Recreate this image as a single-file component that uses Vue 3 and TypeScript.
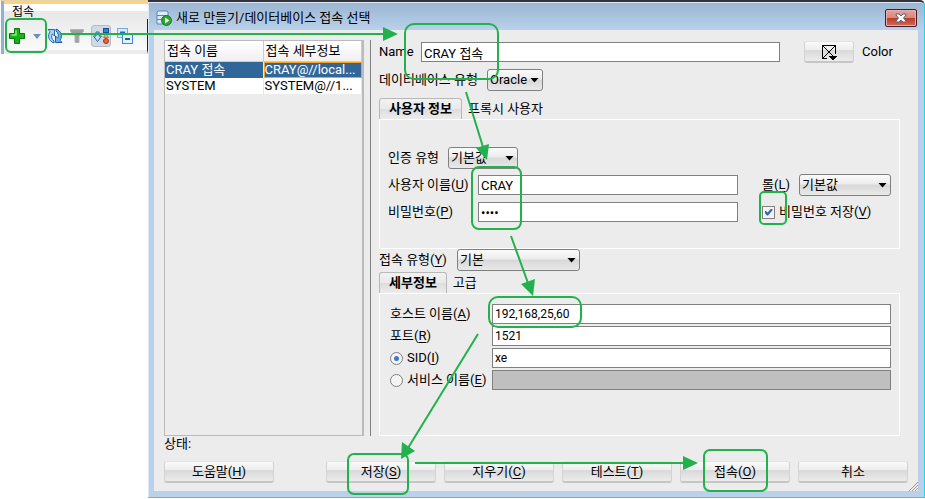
<script setup lang="ts">
import { ref } from 'vue'

interface Connection {
  name: string
  detail: string
}

interface Action {
  id: string
  label: string
  key?: string
}

const connections: Connection[] = [
  { name: 'CRAY 접속', detail: 'CRAY@//local...' },
  { name: 'SYSTEM', detail: 'SYSTEM@//1...' },
]

const actions: Action[] = [
  { id: 'save', label: '저장', key: 'S' },
  { id: 'clear', label: '지우기', key: 'C' },
  { id: 'test', label: '테스트', key: 'T' },
  { id: 'connect', label: '접속', key: 'O' },
  { id: 'cancel', label: '취소' },
]

const selected = ref(0)
const name = ref('CRAY 접속')
const username = ref('CRAY')
const password = ref('cray')
const savePassword = ref(true)
const host = ref('192,168,25,60')
const port = ref('1521')
const sid = ref('xe')
const service = ref('')
const target = ref('sid')
</script>

<template>
  <div class="screen">
    <section class="dock">
      <div class="dock-tab">접속</div>
      <div class="toolbar">
        <button class="tool add" type="button" aria-label="새 접속">
          <svg width="16" height="16" viewBox="0 0 16 16">
            <path d="M5.500 .5h5v5h5v5h-5v5h-5v-5h-5v-5h5z" fill="#12b512" stroke="#087808" />
            <path d="M7 2.500V7H2.500" fill="none" stroke="#8bee7c" stroke-width="1.500" />
          </svg>
          <svg width="8" height="5" viewBox="0 0 8 5"><path d="M0 0h8L4 5z" fill="#7091b8" /></svg>
        </button>
        <button class="tool" type="button" aria-label="새로 고침">
          <svg width="16" height="16" viewBox="0 0 16 16">
            <path d="M1 1.500h6.500V8L5.300 6C4 8 4.500 11 7 13v2C1.500 13 .2 7.500 3 3.700z" fill="#a5d2f8" stroke="#2468ad" />
            <path d="M15 14.500H8.500V8l2.200 2C12 8 11.500 5 9 3V1c5.500 2 6.800 7.500 4 11.300z" fill="#6db2ee" stroke="#1e5da5" />
          </svg>
        </button>
        <button class="tool" type="button" aria-label="필터">
          <svg width="16" height="16" viewBox="0 0 16 16">
            <path d="M1.500 1.500h13v2L10 8v6.500H6V8L1.500 3.500z" fill="#a0a0a0" stroke="#b4b4b4" />
          </svg>
        </button>
        <button class="tool pressed" type="button" aria-label="정렬">
          <svg width="16" height="18" viewBox="1 0 16 18">
            <path d="M4 5h3v4h2.500L5.500 14.500 1.500 9H4z" fill="#c4e2fc" stroke="#2563ad" />
            <rect x="11.500" y="1.500" width="5" height="4" fill="#3280df" stroke="#174f9b" />
            <path d="M14 6.500l2.500 4h-5z" fill="#f2b13c" stroke="#9b6c25" stroke-width=".7" />
            <circle cx="14" cy="14" r="2.500" fill="#f2603c" stroke="#ad2e18" />
          </svg>
        </button>
        <button class="tool" type="button" aria-label="모두 접기">
          <svg width="16" height="16" viewBox="0 0 16 16">
            <rect x=".5" y=".5" width="10" height="9" fill="#dbecff" stroke="#7ba6e0" />
            <path d="M3 4.500h5" stroke="#2368c2" stroke-width="2" />
            <rect x="5.500" y="6.500" width="10" height="9" fill="#e4f1ff" stroke="#4784d5" />
            <path d="M8 11h5" stroke="#1c5cbc" stroke-width="2" />
          </svg>
        </button>
      </div>
    </section>

    <main class="dialog">
      <header class="titlebar">
        <svg width="16" height="16" viewBox="0 0 16 16">
          <path d="M1 2l1-1h9l1 1v12H1z" fill="#dcebfa" stroke="#5586bd" />
          <path d="M1 5.500h11M1 9.500h11" stroke="#5586bd" />
          <circle cx="10.500" cy="10.500" r="5" fill="#2ca52c" stroke="#178017" />
          <path d="M9 7.500v6l4.500-3z" fill="#fff" />
        </svg>
        <h1>새로 만들기/데이터베이스 접속 선택</h1>
        <button class="close" type="button" aria-label="닫기">
          <svg width="12" height="10" viewBox="0 0 12 10">
            <path d="M1 1h3l2 2 2-2h3v1L8.500 5 11 8v1H8L6 7 4 9H1V8l2.500-3L1 2z" fill="#fff" stroke="#53657c" />
          </svg>
        </button>
      </header>

      <form class="content" @submit.prevent>
        <div class="body">
          <div class="list">
            <table>
              <thead>
                <tr><th>접속 이름</th><th>접속 세부정보</th></tr>
              </thead>
              <tbody>
                <tr
                  v-for="(item, i) in connections"
                  :key="item.name"
                  :class="{ active: i === selected }"
                  @click="selected = i"
                >
                  <td>{{ item.name }}</td>
                  <td>{{ item.detail }}</td>
                </tr>
              </tbody>
            </table>
          </div>
          <div class="splitter"></div>

          <div class="editor">
            <div class="row name-row">
              <label for="name">Name</label>
              <input id="name" v-model="name" class="grow" type="text" />
              <button id="color" class="btn color" type="button" aria-label="Color">
                <svg width="16" height="16" viewBox="0 0 16 16" shape-rendering="crispEdges">
                  <path d="M6 14.500H1.500v-13h13V10M2 2l12 12M14 2L2 14" fill="none" stroke="#000" />
                  <path d="M8 12h8v1h-1v1h-1v1h-1v1h-2v-1h-1v-1H9v-1H8z" fill="#000" />
                </svg>
              </button>
              <label class="color-label" for="color">Color</label>
            </div>

            <div class="row db-row">
              <label for="db">데이터베이스 유형</label>
              <span class="combo db">
                <select id="db"><option>Oracle</option></select><i></i>
              </span>
            </div>

            <div class="tabs">
              <button class="tab current" type="button">사용자 정보</button>
              <button class="tab" type="button">프록시 사용자</button>
            </div>
            <div class="panel user-panel">
              <div class="row">
                <label class="auth-label" for="auth">인증 유형</label>
                <span class="combo auth">
                  <select id="auth"><option>기본값</option></select><i></i>
                </span>
              </div>
              <div class="row">
                <label class="user-label" for="user">사용자 이름(<u>U</u>)</label>
                <input id="user" v-model="username" class="grow" type="text" />
                <div class="side">
                  <label class="role-label" for="role">롤(<u>L</u>)</label>
                  <span class="combo grow">
                    <select id="role"><option>기본값</option></select><i></i>
                  </span>
                </div>
              </div>
              <div class="row">
                <label class="user-label" for="pass">비밀번호(<u>P</u>)</label>
                <input id="pass" v-model="password" class="grow" type="password" />
                <div class="side">
                  <input id="remember" v-model="savePassword" type="checkbox" />
                  <label for="remember">비밀번호 저장(<u>V</u>)</label>
                </div>
              </div>
            </div>

            <div class="row">
              <label class="kind-label" for="kind">접속 유형(<u>Y</u>)</label>
              <span class="combo kind">
                <select id="kind"><option>기본</option></select><i></i>
              </span>
            </div>

            <div class="tabs detail-tabs">
              <button class="tab current" type="button">세부정보</button>
              <button class="tab" type="button">고급</button>
            </div>
            <div class="panel detail-panel">
              <div class="field">
                <label for="host">호스트 이름(<u>A</u>)</label>
                <input id="host" v-model="host" type="text" />
              </div>
              <div class="field">
                <label for="port">포트(<u>R</u>)</label>
                <input id="port" v-model="port" type="text" />
              </div>
              <div class="field">
                <label><input v-model="target" type="radio" name="target" value="sid" />SID(<u>I</u>)</label>
                <input v-model="sid" type="text" aria-label="SID" />
              </div>
              <div class="field">
                <label><input v-model="target" type="radio" name="target" value="service" />서비스 이름(<u>E</u>)</label>
                <input v-model="service" type="text" aria-label="서비스 이름" :disabled="target !== 'service'" />
              </div>
            </div>
          </div>
        </div>

        <p class="status">상태:</p>
        <footer class="actions">
          <button class="btn help" type="button">도움말(<u>H</u>)</button>
          <button v-for="a in actions" :key="a.id" class="btn" type="button">
            {{ a.label }}<template v-if="a.key">(<u>{{ a.key }}</u>)</template>
          </button>
        </footer>
      </form>
      <svg class="grip" width="9" height="9" viewBox="0 0 9 9">
        <path d="M0 9l9-9M3 9l6-6M6 9l3-3" stroke="#a29c8c" />
      </svg>
    </main>

    <svg class="guide" width="925" height="499" viewBox="0 0 925 499" aria-hidden="true">
      <g fill="none" stroke="#22b14c" stroke-width="2">
        <rect x="6" y="19" width="40" height="33" rx="5" />
        <rect x="405" y="24" width="93" height="55" rx="9" />
        <rect x="472" y="167" width="49" height="62" rx="7" />
        <rect x="760" y="192" width="26" height="32" rx="4" />
        <rect x="489" y="297" width="92" height="30" rx="9" />
        <rect x="348" y="454" width="60" height="40" rx="6" />
        <rect x="704" y="450" width="63" height="41" rx="6" />
        <path d="M60 34H384M466 92L483 147M511 236L528 283M478 334L408 448M415 463H684" />
      </g>
      <g fill="#22b14c">
        <path d="M383 27v14l15-7z" />
        <path d="M476 148l13-4-2 16z" />
        <path d="M521 284l14-5-2 17z" />
        <path d="M402 442l13 9-14 8z" />
        <path d="M683 456v14l15-7z" />
      </g>
    </svg>
  </div>
</template>

<style>
body {
  margin: 0;
  background: #fff;
}
</style>

<style scoped>
* {
  box-sizing: border-box;
}

.screen {
  position: relative;
  display: flex;
  align-items: flex-start;
  color: #000;
  font: 13px/16px Roboto, "Noto Sans CJK KR", sans-serif;
}

button,
input,
select {
  margin: 0;
  color: inherit;
  font: inherit;
}

u {
  text-underline-offset: 2px;
}

/* Docked connections toolbar */
.dock {
  flex: none;
  width: 148px;
  padding-left: 3px;
  border-left: 1px solid #fff;
  border-top: 1px solid #e8d3a4;
  background: linear-gradient(90deg, #91b0d3 3px, #ececec 3px);
}

.dock-tab {
  height: 18px;
  padding: 2px 8px 0;
  border-top: 3px solid #ffd27d;
  background: linear-gradient(#fff 7px, #e9e9e9 7px);
  font-size: 12px;
  line-height: 12px;
}

.toolbar {
  display: flex;
  align-items: center;
  gap: 6px;
  height: 35px;
  padding: 3px 0 0 5px;
  border-right: 1px solid #222;
  border-bottom: 4px solid #ececec;
  background: linear-gradient(#ebebeb, #fafafa);
}

.tool {
  display: flex;
  align-items: center;
  padding: 0;
  border: 0;
  background: none;
}

.add {
  gap: 8px;
}

.tool.pressed {
  padding: 1px;
  border: 1px solid #b4bbc8;
  border-radius: 3px;
  background: #d3d9e3;
}

/* Dialog frame */
.dialog {
  position: relative;
  flex: 1;
  min-width: 0;
  padding: 0 6px 6px;
  border: solid #28d2e6;
  border-width: 0 1px 1px 0;
  border-top: 2px solid #35313b;
  border-top-right-radius: 5px;
  background: linear-gradient(#9ab5d2, #b9d1ea 28px);
  box-shadow: inset 1px 1px #dce9f6;
}

.titlebar {
  display: flex;
  align-items: center;
  gap: 4px;
  height: 28px;
  padding: 4px 1px 0 2px;
}

h1 {
  flex: 1;
  margin: 0;
  font-size: 13px;
  font-weight: 400;
}

.close {
  display: grid;
  place-items: center;
  width: 32px;
  height: 18px;
  padding: 0;
  border: 1px solid #481a28;
  border-radius: 2px;
  background: linear-gradient(#e5a49b, #d9877a 50%, #b93c22 50%, #d0695a);
  box-shadow: inset 0 0 0 1px #e8b0a8;
}

.content {
  padding: 10px 10px 8px;
  background: #ececec;
}

.body {
  display: flex;
}

.list {
  flex: none;
  width: 200px;
  border: 1px solid #bbb;
  border-right-width: 2px;
}

table {
  width: 100%;
  border-collapse: separate;
  border-spacing: 0;
  table-layout: fixed;
}

th {
  height: 21px;
  padding: 0 2px;
  border-right: 1px solid #ccc;
  border-bottom: 1px solid #ccc;
  background: linear-gradient(#fff, #f0f0f0);
  font-weight: 400;
  text-align: left;
}

td {
  height: 16px;
  padding: 0 1px;
  border-right: 1px solid #e6e6e6;
  background: #fff;
  line-height: 14px;
  white-space: nowrap;
}

.active td {
  background: #316699;
  color: #fff;
}

.active td:last-child {
  padding: 0;
  border: 1px solid #f9a31b;
}

.splitter {
  flex: none;
  width: 7px;
  border-right: 1px solid #808080;
}

.editor {
  flex: 1;
  min-width: 0;
  padding: 1px 8px 0;
}

.row,
.side {
  display: flex;
  align-items: center;
  height: 22px;
}

.grow {
  flex: 1;
  min-width: 0;
}

label {
  flex: none;
  white-space: nowrap;
}

input[type="text"],
input[type="password"] {
  height: 20px;
  padding: 0 2px;
  border: 1px solid #808080;
  border-radius: 0;
  outline: 0;
  background: #fff;
}

input:disabled {
  background: #bfbfbf !important;
}

.name-row label:first-child {
  width: 42px;
}

.color {
  width: 50px;
  margin-left: 24px;
}

.name-row .color-label {
  width: 38px;
  margin-left: 8px;
}

.db-row {
  margin: 6px 0 7px;
}

.db-row label {
  width: 108px;
}

.combo {
  display: grid;
  align-items: center;
  height: 22px;
}

.combo select {
  grid-area: 1 / 1;
  width: 100%;
  height: 22px;
  padding: 0 2px;
  border: 1px solid #808080;
  border-radius: 3px;
  appearance: none;
  background: linear-gradient(#fbfbfb, #ececec 45%, #d8d8d8 50%, #e9e9e9);
}

.combo i {
  grid-area: 1 / 1;
  justify-self: end;
  width: 9px;
  height: 5px;
  margin-right: 4px;
  background: #000;
  clip-path: polygon(0 0, 100% 0, 50% 100%);
  pointer-events: none;
}

.db {
  width: 56px;
}

.auth {
  width: 70px;
}

.kind {
  width: 123px;
}

.tabs {
  display: flex;
  height: 21px;
}

.tab {
  padding: 0 8px;
  border: 0;
  background: none;
  white-space: nowrap;
}

.tab.current {
  border: 1px solid #b8b8b8;
  border-bottom: 0;
  border-radius: 3px 3px 0 0;
  padding: 0 9px;
  background: linear-gradient(#f2f2f2, #e9e9e9 50%, #dcdcdc 50%, #ececec);
  font-weight: 700;
}

.tab + .tab {
  padding-left: 6px;
}

.panel {
  border: 1px solid #fff;
}

.user-panel {
  display: grid;
  gap: 5px;
  padding: 27px 8px 25px;
}

.auth-label {
  width: 60px;
}

.user-label {
  width: 90px;
}

.side {
  width: 129px;
  margin-left: 24px;
}

.role-label {
  width: 37px;
}

.kind-label {
  width: 78px;
}

.detail-tabs {
  margin-top: 1px;
}

.detail-panel {
  display: grid;
  gap: 2px;
  padding: 10px 8px 45px 10px;
}

.field {
  display: grid;
  grid-template-columns: 102px 1fr;
  align-items: center;
}

.field input[type="text"] {
  font-size: 12px;
}

.field label {
  display: flex;
  align-items: center;
}

input[type="checkbox"],
input[type="radio"] {
  display: grid;
  flex: none;
  place-items: center;
  width: 13px;
  height: 13px;
  margin-right: 4px;
  border: 1px solid #808080;
  appearance: none;
  background: #f4f4f4;
}

input[type="radio"] {
  border-radius: 50%;
}

input[type="radio"]:checked::after {
  width: 5px;
  height: 5px;
  border-radius: 50%;
  background: #3f76cf;
  content: "";
}

input[type="checkbox"]:checked::after {
  width: 8px;
  height: 7px;
  background: #3565c4;
  clip-path: polygon(0 35%, 20% 35%, 38% 58%, 85% 0, 100% 0, 100% 25%, 45% 100%, 30% 100%, 0 60%);
  content: "";
}

.status {
  margin: 0 0 10px;
  line-height: 15px;
}

.actions {
  display: flex;
  gap: 8px;
}

.btn {
  height: 22px;
  padding: 0;
  border: 1px solid #d2d2d2;
  border-top-color: #e4e4e4;
  border-bottom: 2px solid #c6c6c6;
  border-radius: 3px;
  background: linear-gradient(#fafafa, #eee 40%, #d9d9d9 45%, #ececec);
}

.color {
  display: grid;
  place-items: center;
}

.actions .btn {
  flex: 0 0 110px;
}

.actions .help {
  margin-right: auto;
}

.grip {
  position: absolute;
  right: 6px;
  bottom: 6px;
}

/* Walkthrough marks drawn over the window */
.guide {
  position: absolute;
  top: 0;
  left: 0;
  pointer-events: none;
}
</style>
